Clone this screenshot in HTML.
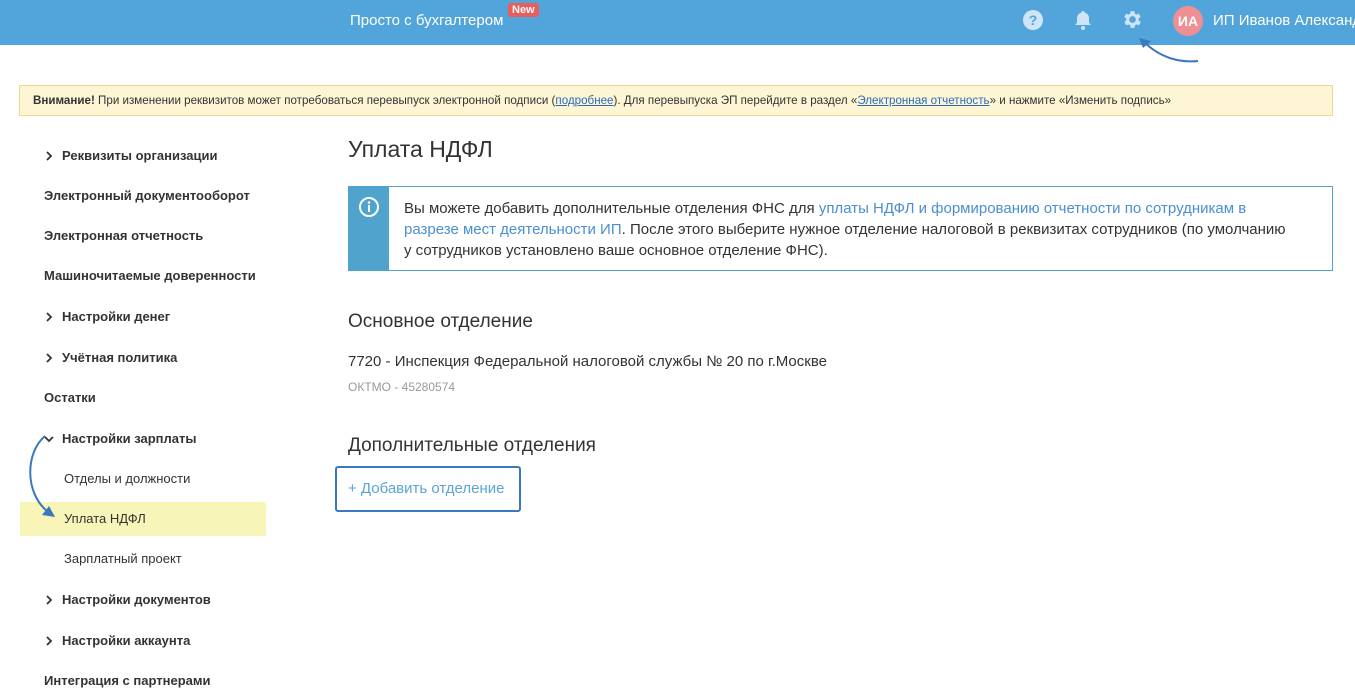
<!DOCTYPE html><html><head><meta charset="utf-8"><style>
*{margin:0;padding:0;box-sizing:border-box}
body{width:1355px;height:698px;overflow:hidden;background:#fff;font-family:"Liberation Sans",sans-serif;color:#333;position:relative}
.top{position:absolute;left:0;top:0;width:1355px;height:45px;background:#52a5db}
.abs{position:absolute;white-space:nowrap}
.warn{position:absolute;left:19px;top:85px;width:1314px;height:31px;background:#fdf5d3;border:1px solid #f0d890;font-size:11.6px;line-height:29px;padding-left:13px;color:#333;white-space:nowrap}
.warn a{color:#2a6bbf;text-decoration:underline}
.nav{position:absolute;left:44px;font-size:13px;font-weight:bold;color:#333}
.sub{position:absolute;left:64px;font-size:13px;color:#333}
.chev{position:absolute;left:44px;top:0}
</style></head><body>
<div class="top"></div>
<div class="abs" style="left:350px;top:12px;color:#fff;font-size:15px">Просто с бухгалтером</div>
<div class="abs" style="left:508px;top:3px;background:#e85d5d;color:#fff;font-size:11px;font-weight:bold;padding:1px 4px;border-radius:3px">New</div>
<svg class="abs" style="left:1022px;top:9px" width="22" height="22"><circle cx="11" cy="11" r="10" fill="#cfe5f7"/><text x="11" y="16" text-anchor="middle" font-size="14" font-weight="bold" fill="#52a5db" font-family="Liberation Sans">?</text></svg>
<svg class="abs" style="left:1073px;top:9px" width="20" height="22"><path d="M10 2a1.5 1.5 0 0 1 1.5 1.5c3 .8 4.5 3 4.5 6v4l2 2.5H2l2-2.5v-4c0-3 1.5-5.2 4.5-6A1.5 1.5 0 0 1 10 2z" fill="#cfe5f7"/><circle cx="10" cy="19" r="2" fill="#cfe5f7"/></svg>
<svg class="abs" style="left:1121px;top:8px" width="23" height="23" viewBox="0 0 24 24"><path fill="#cfe5f7" d="M19.4 13a7.5 7.5 0 0 0 0-2l2.1-1.6-2-3.5-2.5 1a7.3 7.3 0 0 0-1.7-1L15 3.3h-4l-.4 2.6c-.6.3-1.2.6-1.7 1l-2.5-1-2 3.5L6.6 11a7.5 7.5 0 0 0 0 2l-2.1 1.6 2 3.5 2.5-1c.5.4 1.1.7 1.700 1l.4 2.6h4l.4-2.6c.6-.3 1.2-.6 1.7-1l2.5 1 2-3.5zM13 15.5a3.5 3.5 0 1 1 0-7 3.5 3.5 0 0 1 0 7z" transform="translate(-1 0)"/></svg>
<div class="abs" style="left:1173px;top:6px;width:30px;height:30px;border-radius:50%;background:#ef8f93;color:#fff;font-weight:bold;font-size:14px;line-height:30px;text-align:center">ИА</div>
<div class="abs" style="left:1213px;top:12px;color:#fff;font-size:15px">ИП Иванов Александр</div>
<svg class="abs" style="left:1135px;top:36px" width="70" height="30"><path d="M63 25C45 27 25 22 8 5" stroke="#3a78c0" stroke-width="2" fill="none"/><path d="M4 2l12 3-8 7z" fill="#3a78c0"/></svg>
<div class="warn"><b>Внимание!</b> При изменении реквизитов может потребоваться перевыпуск электронной подписи (<a>подробнее</a>). Для перевыпуска ЭП перейдите в раздел «<a>Электронная отчетность</a>» и нажмите «Изменить подпись»</div>
<svg class="abs" style="left:45px;top:151px" width="8" height="10"><path d="M2 1l4 4-4 4" stroke="#333" stroke-width="1.8" fill="none"/></svg><div class="nav" style="left:62px;top:148px">Реквизиты организации</div>
<div class="nav" style="top:188px">Электронный документооборот</div>
<div class="nav" style="top:228px">Электронная отчетность</div>
<div class="nav" style="top:268px">Машиночитаемые доверенности</div>
<svg class="abs" style="left:45px;top:312px" width="8" height="10"><path d="M2 1l4 4-4 4" stroke="#333" stroke-width="1.8" fill="none"/></svg><div class="nav" style="left:62px;top:309px">Настройки денег</div>
<svg class="abs" style="left:45px;top:353px" width="8" height="10"><path d="M2 1l4 4-4 4" stroke="#333" stroke-width="1.8" fill="none"/></svg><div class="nav" style="left:62px;top:350px">Учётная политика</div>
<div class="nav" style="top:390px">Остатки</div>
<svg class="abs" style="left:44px;top:435px" width="10" height="8"><path d="M1 2l4 4 4-4" stroke="#333" stroke-width="1.8" fill="none"/></svg><div class="nav" style="left:62px;top:431px">Настройки зарплаты</div>
<div class="sub" style="top:471px">Отделы и должности</div>
<div class="abs" style="left:20px;top:502px;width:246px;height:34px;background:#f8f5b8"></div>
<div class="sub" style="top:511px">Уплата НДФЛ</div>
<svg class="abs" style="left:25px;top:433px" width="40" height="90"><path d="M20 3C0 20 0 60 22 78" stroke="#3a78c0" stroke-width="2" fill="none"/><path d="M30 84l-13-2 7-9z" fill="#3a78c0"/></svg>
<div class="sub" style="top:551px">Зарплатный проект</div>
<svg class="abs" style="left:45px;top:595px" width="8" height="10"><path d="M2 1l4 4-4 4" stroke="#333" stroke-width="1.8" fill="none"/></svg><div class="nav" style="left:62px;top:592px">Настройки документов</div>
<svg class="abs" style="left:45px;top:636px" width="8" height="10"><path d="M2 1l4 4-4 4" stroke="#333" stroke-width="1.8" fill="none"/></svg><div class="nav" style="left:62px;top:633px">Настройки аккаунта</div>
<div class="nav" style="top:673px">Интеграция с партнерами</div>
<div class="abs" style="left:348px;top:136px;font-size:23px;color:#333">Уплата НДФЛ</div>
<div class="abs" style="left:348px;top:186px;width:985px;height:85px;border:1px solid #4fa3cc"></div>
<div class="abs" style="left:348px;top:186px;width:41px;height:85px;background:#4fa3cc"></div>
<svg class="abs" style="left:358px;top:196px" width="22" height="22"><circle cx="11" cy="11" r="9" stroke="#fff" stroke-width="2" fill="none"/><rect x="10" y="9" width="2" height="7" fill="#fff"/><circle cx="11" cy="6.5" r="1.3" fill="#fff"/></svg>
<div class="abs" style="left:404px;top:198px;font-size:15px;line-height:21px;color:#333">Вы можете добавить дополнительные отделения ФНС для <span style="color:#4a8fd0">уплаты НДФЛ и формированию отчетности по сотрудникам в<br>разрезе мест деятельности ИП</span>. После этого выберите нужное отделение налоговой в реквизитах сотрудников (по умолчанию<br>у сотрудников установлено ваше основное отделение ФНС).</div>
<div class="abs" style="left:348px;top:311px;font-size:19px">Основное отделение</div>
<div class="abs" style="left:348px;top:353px;font-size:15px">7720 - Инспекция Федеральной налоговой службы № 20 по г.Москве</div>
<div class="abs" style="left:348px;top:380px;font-size:12px;color:#999">ОКТМО - 45280574</div>
<div class="abs" style="left:348px;top:435px;font-size:19px">Дополнительные отделения</div>
<div class="abs" style="left:335px;top:466px;width:186px;height:46px;border:2px solid #3a78c0;border-radius:3px"></div>
<div class="abs" style="left:348px;top:480px;font-size:15px;color:#5aa4d8">+ Добавить отделение</div>
</body></html>
